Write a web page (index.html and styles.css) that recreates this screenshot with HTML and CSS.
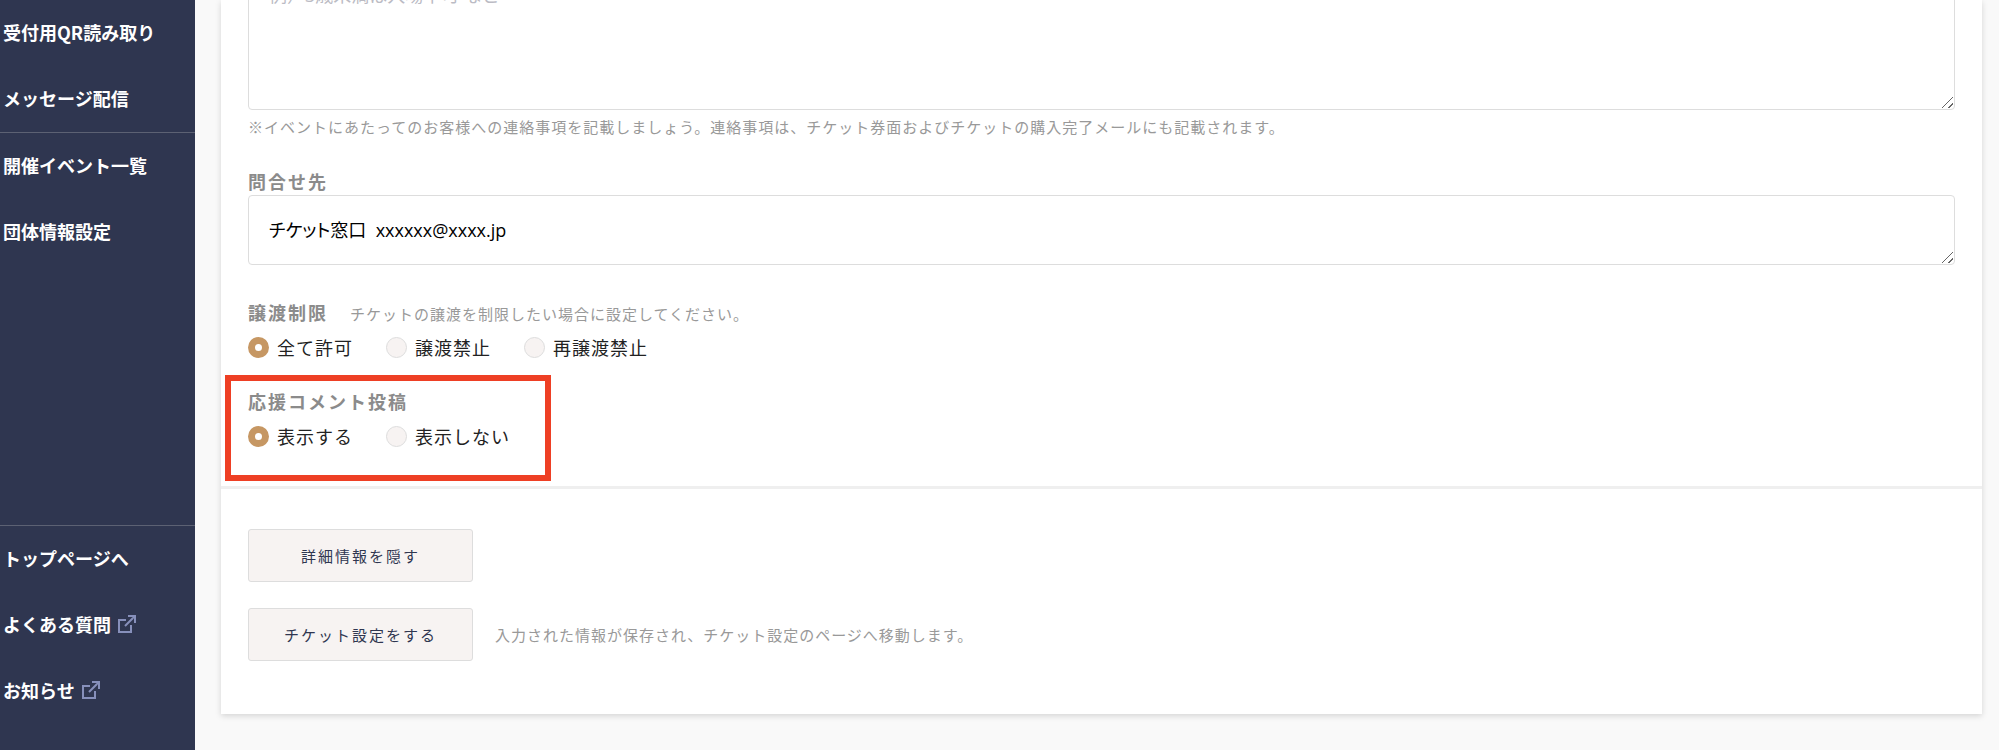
FILE: index.html
```html
<!DOCTYPE html>
<html lang="ja">
<head>
    <meta charset="UTF-8">
    <meta name="viewport" content="width=device-width, initial-scale=1.0">
    <title>イベント設定</title>
    <link rel="stylesheet" href="styles.css">
</head>
<body>
    <div class="page">
        <nav class="sidebar">
            <ul class="nav">
                <li><a href="#">受付用QR読み取り</a></li>
                <li><a href="#">メッセージ配信</a></li>
            </ul>
            <ul class="nav nav-line">
                <li><a href="#">開催イベント一覧</a></li>
                <li><a href="#">団体情報設定</a></li>
            </ul>
            <ul class="nav nav-line nav-bottom">
                <li><a href="#">トップページへ</a></li>
                <li>
                    <a href="#">よくある質問
                        <svg class="ext" viewBox="0 0 18 18"><path d="M8 5H1v12h12v-7M7 11L15 3"/><path class="head" d="M10 0h8v8h-2V4l-2-2h-4z"/></svg>
                    </a>
                </li>
                <li>
                    <a href="#">お知らせ
                        <svg class="ext" viewBox="0 0 18 18"><path d="M8 5H1v12h12v-7M7 11L15 3"/><path class="head" d="M10 0h8v8h-2V4l-2-2h-4z"/></svg>
                    </a>
                </li>
            </ul>
        </nav>
        <main class="main">
            <form class="card">
                <div class="fields">
                    <div class="item">
                        <textarea class="box notice" aria-label="連絡事項" placeholder="例）3歳未満は入場不可 など"></textarea>
                        <p class="hint">※イベントにあたってのお客様への連絡事項を記載しましょう。連絡事項は、チケット券面およびチケットの購入完了メールにも記載されます。</p>
                    </div>
                    <div class="item contact-item">
                        <label class="title" for="contact">問合せ先</label>
                        <textarea class="box contact" id="contact">チケット窓口  xxxxxx@xxxx.jp</textarea>
                    </div>
                    <fieldset class="item">
                        <legend class="title">譲渡制限<span class="hint">チケットの譲渡を制限したい場合に設定してください。</span></legend>
                        <div class="radios">
                            <label><input type="radio" name="transfer" checked>全て許可</label>
                            <label><input type="radio" name="transfer">譲渡禁止</label>
                            <label><input type="radio" name="transfer">再譲渡禁止</label>
                        </div>
                    </fieldset>
                    <div class="item marked">
                        <fieldset>
                            <legend class="title">応援コメント投稿</legend>
                            <div class="radios">
                                <label><input type="radio" name="comment" checked>表示する</label>
                                <label><input type="radio" name="comment">表示しない</label>
                            </div>
                        </fieldset>
                    </div>
                </div>
                <div class="actions">
                    <div class="row">
                        <button type="button">詳細情報を隠す</button>
                    </div>
                    <div class="row">
                        <button type="button">チケット設定をする</button>
                        <p class="hint">入力された情報が保存され、チケット設定のページへ移動します。</p>
                    </div>
                </div>
            </form>
        </main>
    </div>
</body>
</html>
```
FILE: styles.css
```css
* {
    box-sizing: border-box;
    margin: 0;
    padding: 0;
}

body {
    font-family: "Noto Sans CJK JP", sans-serif;
    font-size: 18px;
    color: #222;
    background: #fff;
}

.page {
    display: flex;
    align-items: stretch;
    background: #f9f9f9;
}

/* sidebar */
.sidebar {
    display: flex;
    flex-direction: column;
    flex: 0 0 195px;
    background: #2f3650;
}

.nav {
    list-style: none;
}

.nav a {
    display: flex;
    align-items: center;
    gap: 7px;
    height: 66px;
    padding: 0 0 2px 3px;
    color: #fff;
    font-weight: 700;
    text-decoration: none;
    white-space: nowrap;
}

.nav-line {
    border-top: 1px solid #5c6173;
}

.nav-bottom {
    margin-top: auto;
    padding-bottom: 26px;
}

.ext {
    width: 18px;
    height: 18px;
    fill: none;
    stroke: #8790bb;
    stroke-width: 2;
}

.ext .head {
    fill: #8790bb;
    stroke: none;
}

/* content */
.main {
    flex: 1;
    min-width: 0;
    padding: 0 17px 36px 26px;
}

.card {
    background: #fff;
    box-shadow: 0 2px 6px rgba(0, 0, 0, 0.15);
}

.fields {
    padding: 0 27px 10px;
    border-bottom: 3px solid #efefef;
}

.fields::before {
    content: "";
    display: table;
}

fieldset {
    border: 0;
}

.item {
    margin-bottom: 23px;
}

.contact-item {
    margin-bottom: 33px;
}

.title {
    display: block;
    height: 28px;
    line-height: 28px;
    font-weight: 700;
    letter-spacing: 2px;
    color: #8b8b8b;
}

.hint {
    font-size: 15px;
    line-height: 34px;
    font-weight: 400;
    letter-spacing: 1px;
    color: #999;
}

.title .hint {
    margin-left: 22px;
    line-height: 28px;
}

.box {
    display: block;
    width: 100%;
    border: 1px solid #ddd;
    border-radius: 4px;
    background: #fff;
    font-family: "Open Sans", "Noto Sans CJK JP", sans-serif;
    font-size: 18px;
    line-height: 28px;
    color: #000;
}

.box::placeholder {
    color: #bbbbc4;
}

.box::-webkit-resizer {
    background: linear-gradient(135deg, transparent 46%, #666 46%, #666 54%, transparent 54%, transparent 76%, #666 76%, #666 84%, transparent 84%) 3px 3px / 11px 11px no-repeat;
}

.notice {
    height: 130px;
    margin-top: -20px;
    padding: 0 20px;
}

.contact {
    height: 70px;
    padding: 20px;
    font-feature-settings: "palt";
}

.radios {
    display: flex;
    gap: 33px;
    padding: 7px 0 3px;
}

.radios label {
    display: flex;
    align-items: center;
    gap: 8px;
    height: 28px;
    letter-spacing: 1px;
}

.radios input {
    appearance: none;
    width: 21px;
    height: 21px;
    border: 1px solid #ddd;
    border-radius: 50%;
    background: #f7f3f2;
}

.radios input:checked {
    border: 7px solid #c69763;
    background: #fff;
}

.marked {
    position: relative;
}

/* red frame over the comment setting */
.marked::after {
    content: "";
    position: absolute;
    top: -12px;
    left: -23px;
    width: 314px;
    height: 94px;
    border: 6px solid #ee3f24;
    pointer-events: none;
}

.actions {
    padding: 40px 27px 53px;
}

.row {
    display: flex;
    align-items: center;
    gap: 22px;
}

.row + .row {
    margin-top: 26px;
}

button {
    width: 225px;
    height: 53px;
    border: 1px solid #ddd;
    border-radius: 3px;
    background: #f7f3f2;
    font-family: "Noto Sans CJK JP", sans-serif;
    font-size: 15px;
    letter-spacing: 2px;
    color: #2f3650;
}
```
